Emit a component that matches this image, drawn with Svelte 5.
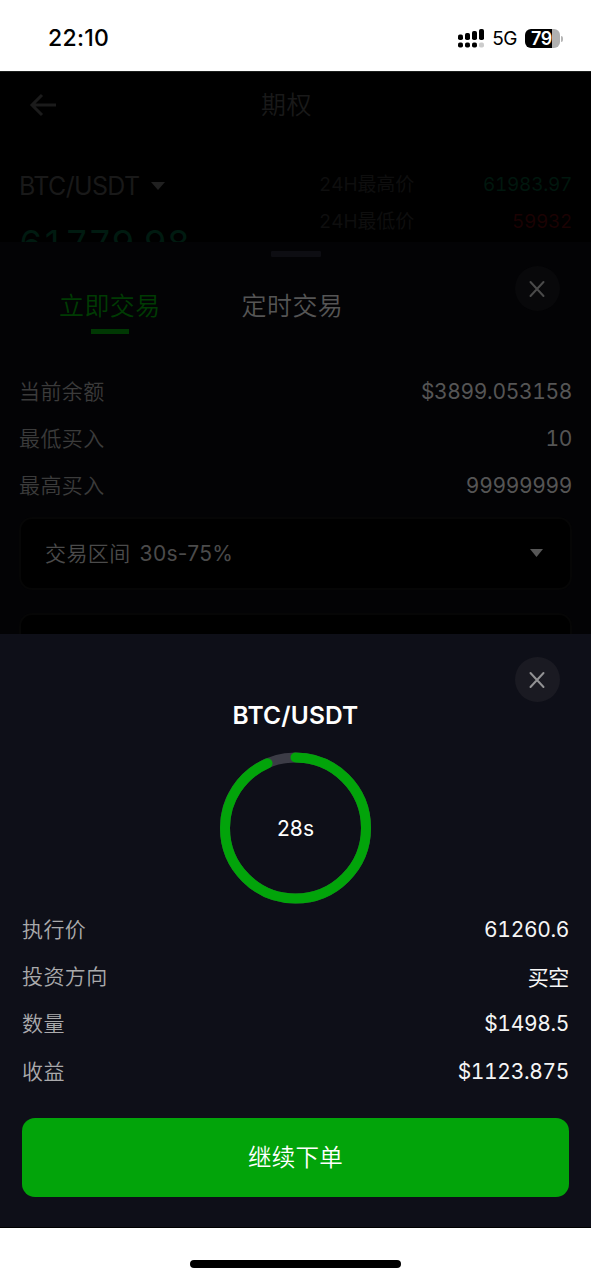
<script>
  const quotes = [
    { label: '24H最高价', value: '61983.97', tone: 'up' },
    { label: '24H最低价', value: '59932', tone: 'down' }
  ];
  const limits = [
    { label: '当前余额', value: '$3899.053158' },
    { label: '最低买入', value: '10' },
    { label: '最高买入', value: '99999999' }
  ];
  const order = [
    { label: '执行价', value: '61260.6' },
    { label: '投资方向', value: '买空' },
    { label: '数量', value: '$1498.5' },
    { label: '收益', value: '$1123.875' }
  ];
  const total = 30;
  const left = 28;
  const radius = 70.5;
  const length = 2 * Math.PI * radius;
</script>

<div class="screen">
  <header class="status">
    <span class="time">22:10</span>
    <div class="indicators">
      <svg class="signal" width="27" height="19" viewBox="0 0 27 19">
        <g fill="#000">
          <rect x="0" y="5.6" width="5" height="5.4" rx="1.8" />
          <rect x="7" y="4" width="5" height="7" rx="1.8" />
          <rect x="14" y="2" width="5" height="9" rx="1.8" />
          <rect x="21" y="0" width="5" height="11" rx="1.8" />
          <rect x="0" y="13.6" width="5" height="5" rx="1.8" />
          <rect x="7" y="13.6" width="5" height="5" rx="1.8" />
          <rect x="14" y="13.6" width="5" height="5" rx="1.8" />
        </g>
        <rect x="21" y="13.6" width="5" height="5" rx="1.8" fill="#ccc" />
      </svg>
      <span class="network">5G</span>
      <div class="battery"><span class="level">79</span><i class="tip"></i></div>
    </div>
  </header>

  <section class="market">
    <div class="nav">
      <svg width="28" height="24" viewBox="0 0 28 24" fill="none" stroke="#1b1b1b" stroke-width="3">
        <path d="M13 2 L3 12 L13 22 M3 12 H27" />
      </svg>
      <h1>期权</h1>
      <span></span>
    </div>
    <div class="ticker">
      <div class="pair">
        <div class="symbol">BTC/USDT
          <svg width="14" height="8" viewBox="0 0 14 8"><path d="M0 0H14L7 8Z" fill="#202020" /></svg>
        </div>
        <div class="price">61779.98</div>
      </div>
      <div class="quotes">
        {#each quotes as q}
          <div class="quote"><span>{q.label}</span><span class={q.tone}>{q.value}</span></div>
        {/each}
      </div>
    </div>
  </section>

  <section class="sheet">
    <div class="handle"></div>
    <div class="tabs">
      <div class="tab active">立即交易</div>
      <div class="tab">定时交易</div>
      <button class="close dim" aria-label="关闭">
        <svg width="17" height="18" viewBox="0 0 17 18" fill="none" stroke="#4a4a4a" stroke-width="2" stroke-linecap="round"><path d="M1.5 2L14.5 16M14.5 2L1.5 16" /></svg>
      </button>
    </div>
    <div class="limits">
      {#each limits as row}
        <div class="row"><span>{row.label}</span><span class="value">{row.value}</span></div>
      {/each}
    </div>
    <div class="field">
      <span>交易区间<b>30s-75%</b></span>
      <svg width="13" height="8" viewBox="0 0 13 8"><path d="M0 0H13L6.5 8Z" fill="#575757" /></svg>
    </div>
    <div class="field next"></div>
  </section>

  <section class="modal">
    <button class="close" aria-label="关闭">
      <svg width="17" height="18" viewBox="0 0 17 18" fill="none" stroke="#929294" stroke-width="2" stroke-linecap="round"><path d="M1.5 2L14.5 16M14.5 2L1.5 16" /></svg>
    </button>
    <h2>BTC/USDT</h2>
    <div class="timer">
      <svg width="151" height="152" viewBox="0.5 0 151 152" fill="none" stroke-width="10">
        <circle cx="76" cy="76" r={radius} stroke="#3c3c46" />
        <circle cx="76" cy="76" r={radius} stroke="#02a40a" stroke-linecap="round" stroke-dasharray="{length * left / total} {length}" transform="rotate(-90 76 76)" />
      </svg>
      <span>{left}s</span>
    </div>
    <div class="order">
      {#each order as row}
        <div class="row"><span>{row.label}</span><span class="value">{row.value}</span></div>
      {/each}
    </div>
    <button class="submit">继续下单</button>
  </section>
  <footer><div class="home"></div></footer>
</div>

<style>
  :global(body) { margin: 0; background: #fff; }
  .screen {
    width: 591px;
    height: 1280px;
    overflow: hidden;
    display: flex;
    flex-direction: column;
    font-family: Inter, "Noto Sans CJK SC", sans-serif;
    font-weight: 400;
    color: #fff;
    background: #fff;
  }
  .screen * { box-sizing: border-box; }
  button { border: 0; padding: 0; font-family: inherit; color: inherit; }
  .status {
    flex: 0 0 71px;
    display: flex;
    justify-content: space-between;
    align-items: flex-start;
    padding: 24px 31px 0 48px;
    color: #000;
  }
  .time { font-size: 23px; line-height: 28px; font-weight: 550; letter-spacing: 0.3px; }
  .indicators { display: flex; align-items: center; height: 28px; }
  .network { font-size: 19px; margin: 0 8px 0 7px; letter-spacing: -0.5px; }
  .battery {
    position: relative;
    width: 35px;
    height: 19px;
    border-radius: 6px;
    background: linear-gradient(90deg, #000 27.5px, #b0b0b0 27.5px);
    display: flex;
    align-items: center;
    padding-left: 6px;
  }
  .level { font-size: 18px; line-height: 19px; font-weight: 600; color: #fff; letter-spacing: -0.4px; }
  .tip { position: absolute; right: -3px; top: 7px; width: 2px; height: 6px; border-radius: 0 2px 2px 0; background: #b5b5b5; }

  .market { flex: 0 0 171px; overflow: hidden; background: #000; border-top: 1px solid #1c1f1d; color: #191919; }
  .nav { height: 66px; margin-bottom: 1px; padding: 0 19px 0 29px; display: grid; grid-template-columns: 38px 1fr 66px; align-items: center; }
  h1 { margin: 0; text-align: center; font-size: 25px; line-height: 40px; font-weight: 350; letter-spacing: 0.5px; }
  .ticker { display: flex; justify-content: space-between; padding: 29px 19px 0 19px; }
  .symbol { display: flex; align-items: center; gap: 12px; height: 36px; font-size: 25px; letter-spacing: -0.65px; }
  .price { font-size: 36px; line-height: 44px; margin-top: 17px; color: #001a10; letter-spacing: -0.3px; font-variant-numeric: tabular-nums; }
  .quotes { width: 253px; color: #0e0e0e; font-size: 19px; }
  .quote { display: flex; justify-content: space-between; height: 37px; line-height: 34px; letter-spacing: -0.3px; font-variant-numeric: tabular-nums; }
  .quote span:first-child { letter-spacing: -0.1px; }
  .up { color: #00170e; }
  .down { color: #1b0203; }

  .sheet { flex: 0 0 392px; overflow: hidden; background: #030305; color: #555; padding: 9px 19px 0; }
  .handle { width: 50px; height: 6px; border-radius: 1px; background: #0d0d12; margin: 0 auto; }
  .tabs { display: flex; align-items: flex-start; height: 110px; padding: 29px 12px 0 40px; font-size: 25px; font-weight: 350; }
  .tab { line-height: 40px; height: 50px; margin-right: 81px; letter-spacing: 0.4px; color: #555; }
  .tab.active { color: #003b03; display: flex; flex-direction: column; align-items: center; }
  .tab.active::after { content: ""; width: 38px; height: 5px; background: #003803; margin-top: 3px; flex: none; }
  .tab + .tab { margin-right: 0; }
  .close {
    width: 45px;
    height: 45px;
    border-radius: 50%;
    background: #1a1a22;
    display: flex;
    align-items: center;
    justify-content: center;
  }
  .close.dim { background: #08080a; margin: -20px 0 0 auto; }
  .row { display: flex; justify-content: space-between; align-items: center; height: 47.3px; font-size: 21px; font-weight: 350; letter-spacing: 0.4px; }
  .row span { padding-bottom: 2px; }
  .row .value { padding: 1px 0 0; font-weight: 400; font-variant-numeric: tabular-nums; letter-spacing: -0.35px; }
  .limits { color: #3b3b3b; }
  .limits .value { color: #555; }
  .field {
    height: 73px;
    margin-top: 8px;
    border: 2px solid #060606;
    border-radius: 13px;
    background: #000;
    padding: 0 27px 2px 24px;
    display: flex;
    align-items: center;
    justify-content: space-between;
    font-size: 21px;
    font-weight: 350;
    color: #4b4b4b;
    letter-spacing: 0.4px;
  }
  .field svg { margin-top: 2px; }
  .field b { font-weight: 400; margin-left: 9px; letter-spacing: 0.3px; }
  .field.next { margin-top: 23px; }

  .modal { flex: 0 0 594px; background: #0e0f18; border-bottom: 1px solid #000; padding: 23px 22px 0; display: flex; flex-direction: column; }
  .modal .close { align-self: flex-end; margin-right: 9px; flex: none; }
  h2 { margin: -3px 0 0; text-align: center; font-size: 24.5px; line-height: 32px; font-weight: 600; letter-spacing: 0.15px; }
  .timer { display: grid; place-items: center; margin: 21px 0 0; height: 152px; }
  .timer > * { grid-area: 1 / 1; }
  .timer svg { display: block; }
  .timer span { font-size: 21px; letter-spacing: 0.1px; }
  .order { margin-top: 1px; color: #aaaaac; }
  .order .value { color: #f5f5f5; }
  .submit { height: 79px; margin-top: 24px; padding-bottom: 3px; border-radius: 13px; background: #02a40a; font-size: 23.5px; font-weight: 350; letter-spacing: 0.3px; flex: none; }
  footer { flex: 1; display: flex; justify-content: center; padding-top: 32px; }
  .home { width: 211px; height: 8px; border-radius: 4px; background: #000; }
</style>
